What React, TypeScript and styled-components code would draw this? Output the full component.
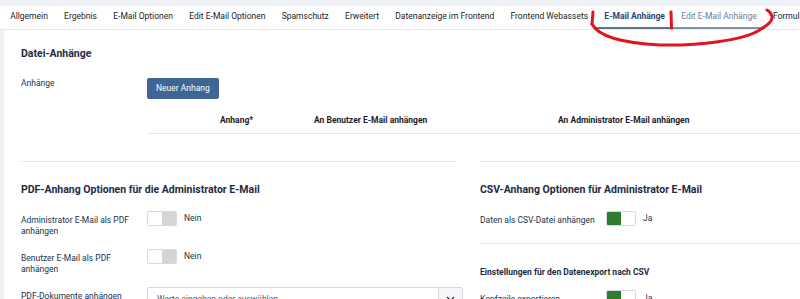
import styled, { createGlobalStyle } from 'styled-components';

/* Data */
const TABS = [
    'Allgemein',
    'Ergebnis',
    'E-Mail Optionen',
    'Edit E-Mail Optionen',
    'Spamschutz',
    'Erweitert',
    'Datenanzeige im Frontend',
    'Frontend Webassets',
    'E-Mail Anhänge',
    'Edit E-Mail Anhänge',
    'Formular',
];

export default function App() {
    return (
        <>
            <GlobalStyle />
            <Page>
                <TabBar>
                    {TABS.map((tab) => (
                        <Tab
                            key = { tab }
                            $state = { tab === 'E-Mail Anhänge' ? 'active' : tab === 'Edit E-Mail Anhänge' ? 'hover' : 'idle' }>
                            {tab}
                        </Tab>
                    ))}
                </TabBar>

                <Content>
                    <Heading>Datei-Anhänge</Heading>
                    <FieldRow>
                        <Label>Anhänge</Label>
                        <div>
                            <PrimaryButton type = 'button'>Neuer Anhang</PrimaryButton>
                        </div>
                    </FieldRow>
                    <TableHead>
                        <Th $pad = { 73 }>Anhang*</Th>
                        <Th>An Benutzer E-Mail anhängen</Th>
                        <Th>An Administrator E-Mail anhängen</Th>
                    </TableHead>

                    <Columns>
                        <Column>
                            <SectionTitle>PDF-Anhang Optionen für die Administrator E-Mail</SectionTitle>
                            <OptionRow>
                                <OptionLabel>Administrator E-Mail als PDF anhängen</OptionLabel>
                                <Switch on = { false } />
                            </OptionRow>
                            <OptionRow>
                                <OptionLabel>Benutzer E-Mail als PDF anhängen</OptionLabel>
                                <Switch on = { false } />
                            </OptionRow>
                            <OptionRow>
                                <OptionLabel>PDF-Dokumente anhängen</OptionLabel>
                                <Select>
                                    <SelectText>Werte eingeben oder auswählen</SelectText>
                                    <SelectToggle>
                                        <svg width = '9' height = '6' viewBox = '0 0 9 6'>
                                            <path d = 'M1 1l3.5 3.5L8 1' fill = 'none' stroke = '#333' strokeWidth = '1.2' />
                                        </svg>
                                    </SelectToggle>
                                </Select>
                            </OptionRow>
                        </Column>

                        <Column>
                            <SectionTitle>CSV-Anhang Optionen für Administrator E-Mail</SectionTitle>
                            <OptionRow>
                                <OptionLabel>Daten als CSV-Datei anhängen</OptionLabel>
                                <Switch on />
                            </OptionRow>
                            <SubSection>
                                <SubTitle>Einstellungen für den Datenexport nach CSV</SubTitle>
                                <OptionRow>
                                    <OptionLabel>Kopfzeile exportieren</OptionLabel>
                                    <Switch on />
                                </OptionRow>
                            </SubSection>
                        </Column>
                    </Columns>
                </Content>

                <Scribble width = '800' height = '60' viewBox = '0 0 800 60'>
                    <g fill = 'none' stroke = '#e3141b' strokeWidth = '3' strokeLinecap = 'round' strokeLinejoin = 'round'>
                        <path d = 'M593 12 L592 24' />
                        <path d = 'M671 12 L671.5 28' />
                        <path d = 'M592 24 C 598 36, 622 43, 660 45 C 700 46, 742 40, 758 31 C 768 25, 773 21, 772 16 C 771 13, 769 11, 767 10' />
                    </g>
                </Scribble>
            </Page>
        </>
    );
}

const Switch = ({ on }: SwitchProps) => (
    <SwitchWrap>
        <SwitchTrack>
            <SwitchHalf $fill = { on ? '#2f7d32' : '#fff' } />
            <SwitchHalf $fill = { on ? '#fff' : '#d5d5d5' } />
        </SwitchTrack>
        <SwitchText>{on ? 'Ja' : 'Nein'}</SwitchText>
    </SwitchWrap>
);

/* Styles */
const GlobalStyle = createGlobalStyle`
  html, body {
    margin: 0;
    background: #eef1f6;
    font-family: Roboto, "Liberation Sans", sans-serif;
    overflow: hidden;
  }
`;

const Page = styled.div`
  position: relative;
  width: 800px;
  height: 299px;
  overflow: hidden;
  padding-top: 6px;
  box-sizing: border-box;
`;

const TabBar = styled.nav`
  display: flex;
  height: 23px;
  padding-left: 2px;
  background: #fff;
  border-bottom: 1px solid #e4e8ee;
  white-space: nowrap;
`;

const Tab = styled.div<{ $state: 'active' | 'hover' | 'idle' }>`
  padding: 0 8.15px;
  font-size: 8.5px;
  line-height: 21px;
  border-bottom: 2px solid ${ (p) => (p.$state === 'idle' ? 'transparent' : p.$state === 'active' ? '#5b7192' : '#8191a8') };
  color: ${ (p) => (p.$state === 'active' ? '#2a4670' : p.$state === 'hover' ? '#6d7d96' : '#1e2126') };
  font-weight: ${ (p) => (p.$state === 'active' ? 700 : 400) };
`;

const Content = styled.main`
  margin-left: 4px;
  height: 300px;
  padding: 17px 0 0 17px;
  background: #fff;
`;

const Heading = styled.h2`
  margin: 0 0 15px;
  font-size: 10.5px;
  line-height: 14px;
  font-weight: 700;
  color: #1d2b42;
`;

const FieldRow = styled.div`
  display: grid;
  grid-template-columns: 126px auto;
`;

const Label = styled.div`
  font-size: 8.5px;
  line-height: 14px;
  color: #22324d;
`;

const PrimaryButton = styled.button`
  height: 21px;
  padding: 0 9px;
  border: 0;
  border-radius: 2px;
  background: #3e6593;
  color: #fff;
  font-family: inherit;
  font-size: 8.5px;
`;

const TableHead = styled.div`
  display: grid;
  grid-template-columns: 167px 244px 1fr;
  height: 26px;
  margin: 8px 0 0 126px;
  border-bottom: 1px solid #e2e5ea;
`;

const Th = styled.div<{ $pad?: number }>`
  padding-left: ${ (p) => p.$pad ?? 0 }px;
  font-size: 8.5px;
  line-height: 26px;
  font-weight: 700;
  color: #1e2126;
`;

const Columns = styled.div`
  display: grid;
  grid-template-columns: 434px 434px;
  column-gap: 25px;
  margin-top: 27px;
`;

const Column = styled.section`
  padding-top: 21px;
  border-top: 1px solid #e2e5ea;
`;

const SectionTitle = styled.h3`
  margin: 0 0 14px;
  font-size: 10.5px;
  line-height: 14px;
  font-weight: 700;
  color: #1d2b42;
`;

const OptionRow = styled.div`
  display: grid;
  grid-template-columns: 126px auto;
  align-items: start;
  margin-bottom: 11px;
`;

const OptionLabel = styled.div`
  margin-top: 4px;
  padding-right: 2px;
  font-size: 8.5px;
  line-height: 11.5px;
  color: #22324d;
`;

const SwitchWrap = styled.div`
  display: flex;
  align-items: center;
  gap: 7px;
  height: 15px;
`;

const SwitchTrack = styled.div`
  display: flex;
  width: 30px;
  height: 15px;
  border: 1px solid #d6dae0;
  border-radius: 2px;
  box-sizing: border-box;
  overflow: hidden;
`;

const SwitchHalf = styled.span<{ $fill: string }>`
  flex: 1;
  background: ${ (p) => p.$fill };
`;

const SwitchText = styled.span`
  font-size: 8.5px;
  color: #22324d;
`;

const Select = styled.div`
  display: flex;
  width: 316px;
  height: 24px;
  border: 1px solid #d3d8df;
  border-radius: 2px;
  box-sizing: border-box;
`;

const SelectText = styled.div`
  flex: 1;
  padding-left: 9px;
  font-size: 8.5px;
  line-height: 22px;
  color: #555b63;
`;

const SelectToggle = styled.div`
  display: flex;
  align-items: center;
  justify-content: center;
  width: 23px;
  border-left: 1px solid #d3d8df;
  background: #f5f6f8;
`;

const SubSection = styled.div`
  margin-top: 17px;
  padding-top: 22px;
  border-top: 1px solid #e2e5ea;
`;

const SubTitle = styled.h4`
  margin: 0 0 12px;
  font-size: 8.5px;
  line-height: 12px;
  font-weight: 700;
  color: #1d2b42;
`;

const Scribble = styled.svg`
  position: absolute;
  top: 0;
  left: 0;
  pointer-events: none;
`;

/* Types */
interface SwitchProps {
    on: boolean,
}
